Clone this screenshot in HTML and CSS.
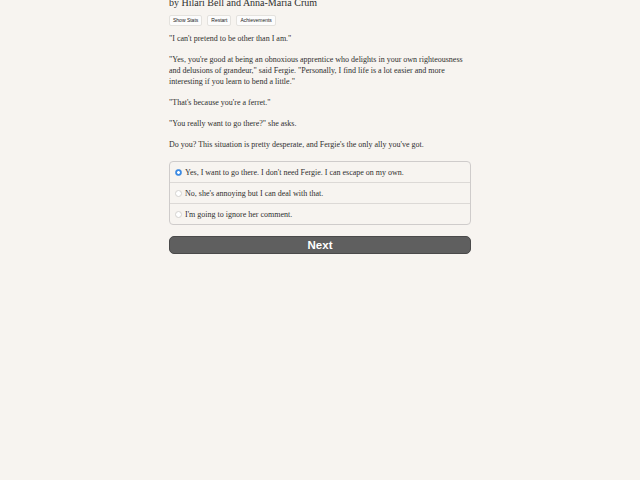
FILE: index.html
```html
<!DOCTYPE html>
<html lang="en">
<head>
	<meta charset="utf-8">
	<title>Choice of the Ferret</title>
	<link rel="stylesheet" href="styles.css">
</head>
<body>

<div id="container">
	<p class="author">by Hilari Bell and Anna-Maria Crum</p>

	<div id="buttons">
		<button type="button" class="spacedLink">Show Stats</button>
		<button type="button" class="spacedLink">Restart</button>
		<button type="button" class="spacedLink">Achievements</button>
	</div>

	<div id="text">
		<p>"I can't pretend to be other than I am."</p>
		<p>"Yes, you're good at being an obnoxious apprentice who delights in your own righteousness and delusions of grandeur," said Fergie. "Personally, I find life is a lot easier and more interesting if you learn to bend a little."</p>
		<p>"That's because you're a ferret."</p>
		<p>"You really want to go there?" she asks.</p>
		<p>Do you? This situation is pretty desperate, and Fergie's the only ally you've got.</p>
	</div>

	<form id="choices">
		<label class="choice">
			<input type="radio" name="choice" value="0" checked>
			<span>Yes, I want to go there. I don't need Fergie. I can escape on my own.</span>
		</label>
		<label class="choice">
			<input type="radio" name="choice" value="1">
			<span>No, she's annoying but I can deal with that.</span>
		</label>
		<label class="choice">
			<input type="radio" name="choice" value="2">
			<span>I'm going to ignore her comment.</span>
		</label>
	</form>

	<button type="button" class="next">Next</button>
</div>

</body>
</html>
```

FILE: styles.css
```css
body {
	margin: 0;
	background-color: #f7f4f0;
	color: #2f2f2f;
	font-family: "Liberation Serif", "Times New Roman", serif;
	font-size: 8px;
	line-height: 11px;
}

#container {
	width: 302px;
	margin: 0 auto;
}

p {margin: 0 0 10px 0;}

.author {
	font-size: 10px;
	line-height: 11px;
	margin: -3px 0 7px 0;
}

#buttons {
	display: flex;
	gap: 5px;
	margin-bottom: 7px;
}

.spacedLink {
	font-family: "Liberation Sans", Arial, sans-serif;
	font-size: 5px;
	line-height: 7px;
	padding: 1px 3px;
	color: #222;
	background-color: #fcfcfc;
	border: 1px solid #e4e2de;
	border-radius: 2px;
}

#text p:last-child {margin-bottom: 11px;}

#choices {
	border: 1px solid #cfcccb;
	border-radius: 4px;
	overflow: hidden;
}

.choice {
	display: flex;
	align-items: center;
	height: 20px;
	padding-left: 5px;
}

.choice + .choice {border-top: 1px solid #dcd9d6;}

/* round radio, blue fill with white dot when picked */
.choice input {
	appearance: none;
	-webkit-appearance: none;
	box-sizing: border-box;
	width: 7px;
	height: 7px;
	margin: 0 3px 0 0;
	border: 1px solid #d4d2cf;
	border-radius: 50%;
	background-color: #fff;
}

.choice input:checked {
	border-color: #3a87e0;
	background: radial-gradient(circle, #fff 0 1.2px, #3d8de6 1.6px);
}

.next {
	display: block;
	width: 100%;
	height: 18px;
	margin-top: 11px;
	padding: 0;
	background-color: #5f5f5f;
	color: #fff;
	border: 1px solid #4a4a4a;
	border-radius: 5px;
	font-family: "Liberation Sans", Arial, sans-serif;
	font-weight: bold;
	font-size: 11.5px;
}
```
